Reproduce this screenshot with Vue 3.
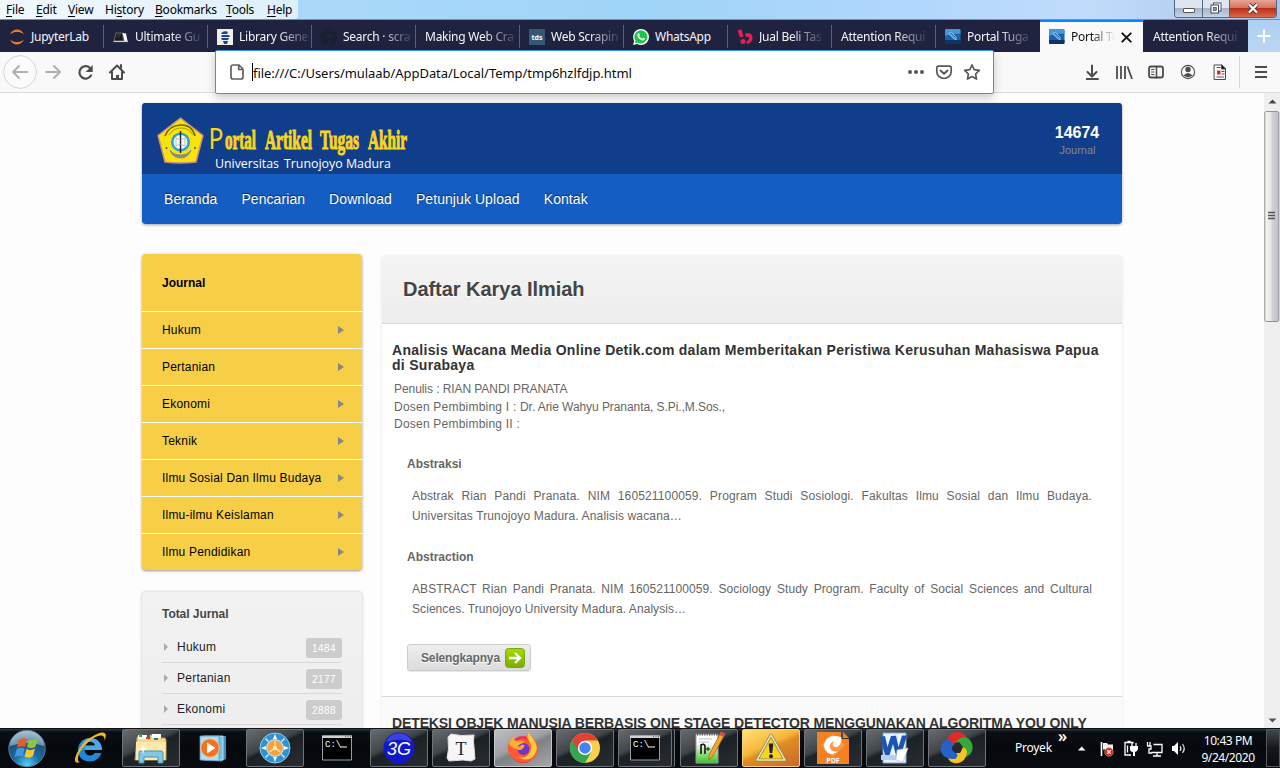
<script setup>
const menus = [
  { k: 'F', rest: 'ile', w: 30 },
  { k: 'E', rest: 'dit', w: 32 },
  { k: 'V', rest: 'iew', w: 37 },
  { pre: 'Hi', k: 's', rest: 'tory', w: 50 },
  { k: 'B', rest: 'ookmarks', w: 71 },
  { k: 'T', rest: 'ools', w: 41 },
  { k: 'H', rest: 'elp', w: 36 }
]
const tabs = [
  { t: 'JupyterLab', icon: 'jupyter' },
  { t: 'Ultimate Gu', icon: 'book', fade: true },
  { t: 'Library Gene', icon: 'libgen', fade: true },
  { t: 'Search · scra', icon: 'github', fade: true },
  { t: 'Making Web Cra', fade: true },
  { t: 'Web Scrapin', icon: 'tds', fade: true },
  { t: 'WhatsApp', icon: 'whatsapp' },
  { t: 'Jual Beli Tas', icon: 'bukalapak', fade: true },
  { t: 'Attention Requi', fade: true },
  { t: 'Portal Tuga', icon: 'portal', fade: true },
  { t: 'Portal Tu', icon: 'portal', fade: true, active: true },
  { t: 'Attention Requi', fade: true }
]
const nav = ['Beranda', 'Pencarian', 'Download', 'Petunjuk Upload', 'Kontak']
const journals = ['Hukum', 'Pertanian', 'Ekonomi', 'Teknik', 'Ilmu Sosial Dan Ilmu Budaya', 'Ilmu-ilmu Keislaman', 'Ilmu Pendidikan']
const totals = [['Hukum', 1484], ['Pertanian', 2177], ['Ekonomi', 2888]]
const apps = [
  { id: 'ie' }, { id: 'explorer', b: 1 }, { id: 'wmp' }, { id: 'compass', b: 1 }, { id: 'cmd' },
  { id: '3g', b: 1 }, { id: 'typora', b: 1 }, { id: 'firefox', b: 1, on: 1 }, { id: 'chrome', b: 1 },
  { id: 'cmd', b: 1, stack: 1 }, { id: 'npp', b: 1 }, { id: 'warn', b: 1, alert: 1 }, { id: 'pdf', b: 1 },
  { id: 'word', b: 1 }, { id: 'ring', b: 1 }
]
</script>

<template>
  <div class="screen">
    <div class="menubar">
      <div class="menus">
        <span v-for="m in menus" :key="m.rest" class="menu" :style="{ width: m.w + 'px' }">{{ m.pre }}<u>{{ m.k }}</u>{{ m.rest }}</span>
      </div>
      <div class="winbtns">
        <span class="wb wmin"><i class="dash"></i></span>
        <span class="wb wmax">
          <svg width="12" height="12" viewBox="0 0 12 12"><rect x="3.5" y="1" width="7.5" height="8" fill="#fff" stroke="#556" /><rect x="1" y="3" width="7.5" height="8" fill="#fff" stroke="#445" /><rect x="3.3" y="5.5" width="3" height="3" fill="#8a97ab" stroke="#445" stroke-width=".7" /></svg>
        </span>
        <span class="wb wclose">
          <svg width="12" height="11" viewBox="0 0 12 11"><path d="M2 1.5l8 8M10 1.5l-8 8" stroke="#533" stroke-width="4" /><path d="M2 1.5l8 8M10 1.5l-8 8" stroke="#fff" stroke-width="2.4" /></svg>
        </span>
      </div>
    </div>

    <div class="tabs">
      <div v-for="(t, i) in tabs" :key="i" class="tab" :class="{ active: t.active, nosep: i > 8 }">
        <svg v-if="t.icon" class="fav" width="16" height="16" viewBox="0 0 16 16">
          <g v-if="t.icon === 'jupyter'" fill="#f37726"><path d="M1 5.500C2.600 2 5 .4 8 .4s5.400 1.600 7 5.100C12.500 3.600 10.500 3 8 3s-4.500.6-7 2.500z" /><path d="M1 10.500C2.600 14 5 15.600 8 15.600s5.400-1.600 7-5.100c-2.500 1.900-4.500 2.500-7 2.500s-4.500-.6-7-2.500z" /></g>
          <g v-else-if="t.icon === 'book'"><path d="M3 4h6.500l1 8H1z" fill="#1a1a1a" stroke="#888" stroke-width=".7" /><path d="M9.500 4l3.500.5 1.500 7.500h-3z" fill="#fff" /><path d="M.5 12.500h14.500" stroke="#ccc" stroke-width="1.200" /><path d="M4 6h4M3.500 8h3" stroke="#444" /></g>
          <g v-else-if="t.icon === 'libgen'"><rect width="16" height="16" fill="#f1f0e6" /><path d="M4 5c1-2 3-3.500 6-2.500 1 .5 1 2 0 2.500zM5 6h7l1 2H4zM4 9h8l-1 2H5zM6 12h5l-1 3H7z" fill="#17458f" /></g>
          <path v-else-if="t.icon === 'github'" d="M6 15v-3c-2 .4-2.600-1-2.600-1M10 15v-3c0-1-.3-1.500-.7-1.800 2-.3 3.200-1.200 3.200-3.200 0-2.500-1.500-3.500-4.500-3.500S3.500 4.500 3.500 7c0 2 1 2.900 3 3.200M5.500 14.500a7 7 0 1 1 5 0" fill="none" stroke="#18202a" stroke-width="1.700" />
          <g v-else-if="t.icon === 'tds'"><rect width="16" height="16" fill="#355876" /><text x="8" y="10.700" text-anchor="middle" font-size="7" font-weight="700" fill="#fff">tds</text></g>
          <g v-else-if="t.icon === 'whatsapp'"><path d="M8 0a8 8 0 0 1 0 16 8 8 0 0 1-3.800-1L0 16l1.200-4A8 8 0 0 1 8 0z" fill="#fff" /><path d="M8 1.300a6.600 6.600 0 1 1-3.500 12.300L1.900 14.200l.7-2.500A6.600 6.600 0 0 1 8 1.300z" fill="#1fc44b" /><path d="M5 4.500c.8-.8 1.200-.3 1.700 1 .2.700-.4 1-.5 1.400.7 1.400 1.600 2.200 3 2.700.6-.1.8-1 1.300-.9 1.400.6 1.600.8 1.200 1.600-.8 1.500-2.700 1.300-4.500.2C5 9.200 3.600 6.500 5 4.500z" fill="#fff" /></g>
          <g v-else-if="t.icon === 'bukalapak'" fill="#e31e52"><path d="M.5 1.500L4.500.2l2 7.300-3.500 1z" /><circle cx="6" cy="12.600" r="2.500" /><path d="M8 4.500Q13 3 15 6q1.500 4-1 7-2 2-4.500 2L9.500 12q2.500-.5 2.500-2.500T8.500 7.500z" /></g>
          <g v-else><rect width="15.500" height="15" rx="1.500" fill="#1764ad" /><path d="M0 1.500Q0 0 1.500 0H14q1.500 0 1.500 1.500V5Q8 4 0 7z" fill="#4597d6" /><path d="M0 11h15.500v2.500q0 1.500-1.500 1.500H1.500Q0 15 0 13.500z" fill="#0c3468" /><path d="M4.500 4l2-.7 4.300 4.500.5 3L8.500 9.500 4.200 5z" fill="#2d71ae" stroke="#b5d7f2" stroke-width=".8" /><path d="M5.500 5l4 4" stroke="#d6eaff" stroke-width=".6" /></g>
        </svg>
        <span class="tt" :class="{ fade: t.fade }">{{ t.t }}</span>
        <svg v-if="t.active" class="tx" width="11" height="11" viewBox="0 0 11 11"><path d="M1.300 1.300l8.400 8.400M9.700 1.300L1.300 9.700" stroke="#111" stroke-width="1.900" stroke-linecap="round" /></svg>
      </div>
      <div class="newtab"><svg width="14" height="14" viewBox="0 0 14 14"><path d="M7 .5v13M.5 7h13" stroke="#fff" stroke-width="2" /></svg></div>
    </div>

    <div class="toolbar">
      <div class="navbtns">
        <svg width="130" height="40" viewBox="0 0 130 40" fill="none" stroke-width="2" stroke-linecap="round" stroke-linejoin="round">
          <circle cx="20" cy="20" r="16.300" fill="#fbfbfb" stroke="#d4d4d5" stroke-width="1" />
          <path d="M27 20H13M19 14l-6 6 6 6" stroke="#b0b0b1" />
          <path d="M46 20h14M54 14l6 6-6 6" stroke="#b0b0b1" />
          <path d="M91 23.500A6.200 6.200 0 1 1 90 16" stroke="#4c4c4f" stroke-width="2.200" />
          <path d="M92.700 13v7h-7z" fill="#4c4c4f" stroke="none" />
          <path d="M110 20.500l7-7 7 7" stroke="#4c4c4f" /><path d="M112 20v7h10v-7" stroke="#4c4c4f" /><path d="M116 28v-5h3v5z" fill="#4c4c4f" stroke="none" /><path d="M121 13v3" stroke="#4c4c4f" />
        </svg>
      </div>
      <div class="tools">
        <svg width="194" height="40" viewBox="0 0 194 40" fill="none" stroke="#4c4c4f" stroke-width="2" stroke-linecap="round" stroke-linejoin="round">
          <path d="M6 13.500v11M1.500 20L6 24.500l4.500-4.500M0 27h12" />
          <path d="M31 14v13M35 14v13M39 14v13M41.500 14.500l4.500 12.500" stroke-width="1.800" stroke-linecap="butt" />
          <rect x="63" y="14.500" width="14" height="11" rx="2" stroke-width="1.800" /><path d="M70.500 15v11" stroke-width="1.500" /><path d="M65.500 17.500h2.500M65.500 20h2.500M65.500 22.500h2.500" stroke-width="1" />
          <circle cx="102" cy="20" r="6.600" stroke-width="1.100" /><circle cx="102" cy="17.500" r="2.700" fill="#4c4c4f" stroke="none" /><path d="M97.500 23.500q4.500-5 9 0-4.500 3.500-9 0z" fill="#4c4c4f" stroke="none" />
          <path d="M128.500 13h7l4 4v10.500h-11z" fill="#fff" stroke-width="1" /><path d="M135.500 13v4h4z" fill="#111" stroke-width="1" /><path d="M131 15.500h3M131 25h6.500M136 19.500h2M136 22h2" stroke-width="1.200" stroke="#555" /><path d="M131 18.500h3.500v4H131z" fill="#d32b35" stroke="none" />
          <path d="M153.500 4v32" stroke="#d7d7db" stroke-width="1" /><path d="M169 15h12M169 20h12M169 25h12" stroke-linecap="butt" />
        </svg>
      </div>
    </div>
    <div class="urlbar">
      <svg class="doc" width="14" height="16" viewBox="0 0 14 16"><path d="M3 1h6l4 4v8a2 2 0 0 1-2 2H3a2 2 0 0 1-2-2V3a2 2 0 0 1 2-2zM8.700 1v4.500H13" fill="none" stroke="#616164" stroke-width="1.700" stroke-linejoin="round" /></svg>
      <span class="caret"></span><span class="url">file:///C:/Users/mulaab/AppData/Local/Temp/tmp6hzlfdjp.html</span>
      <svg class="uicons" width="74" height="20" viewBox="0 0 74 20">
        <g fill="#58585b"><circle cx="3" cy="10" r="2" /><circle cx="9" cy="10" r="2" /><circle cx="15" cy="10" r="2" /></g>
        <path d="M31.500 4.200h11a1.700 1.700 0 0 1 1.700 1.700v3.600a7.200 7 0 0 1-14.400 0V5.900a1.700 1.700 0 0 1 1.700-1.700z" fill="none" stroke="#58585b" stroke-width="1.700" /><path d="M33.500 8.500L37 11.800l3.500-3.300" fill="none" stroke="#58585b" stroke-width="1.900" stroke-linecap="round" stroke-linejoin="round" />
        <path d="M65 3l2.200 4.700 5.200.7-3.800 3.600.9 5.100L65 14.600l-4.500 2.500.9-5.100-3.800-3.600 5.200-.7z" fill="none" stroke="#58585b" stroke-width="1.700" stroke-linejoin="round" />
      </svg>
    </div>

    <div class="viewport">
      <div class="page">
        <header class="head">
          <div class="brand">
            <svg class="logo" width="280" height="71" viewBox="0 0 280 71">
              <path d="M38.500 15L61 32.500 54 59q-15.500 2-31 0L16 32.500z" fill="#f8e30b" stroke="#c98a83" stroke-width="1.500" stroke-linejoin="round" />
              <path d="M23 33q4-10.500 15.500-11T53 33" fill="none" stroke="#6b6413" stroke-width="1.700" />
              <path d="M27 32q4-7 12-7t12 7" fill="none" stroke="#a59c12" />
              <circle cx="38.500" cy="39" r="9.500" fill="#27a2d8" /><circle cx="38.500" cy="39" r="7" fill="#fff" />
              <path d="M38.500 28v22" stroke="#222" stroke-width="1.500" /><path d="M34 35v8M43 35v8M34 35l4 2 5-2M34 43l4-2 5 2" stroke="#9aa7b0" stroke-width=".8" fill="none" />
              <path d="M28 47q3 8 10.500 8T49 47q-3 5-10.500 5T28 47z" fill="#8f8b7d" stroke="#8f8b7d" /><circle cx="24.500" cy="45" r=".9" fill="#444" /><circle cx="53" cy="45" r=".9" fill="#444" />
              <g class="slab"><text class="bigp" x="66.500" y="46" textLength="15" lengthAdjust="spacingAndGlyphs">P</text>
                <text x="83" y="46" textLength="31" lengthAdjust="spacingAndGlyphs">ortal</text>
                <text x="123" y="46" textLength="47" lengthAdjust="spacingAndGlyphs">Artikel</text>
                <text x="178" y="46" textLength="39" lengthAdjust="spacingAndGlyphs">Tugas</text>
                <text x="226" y="46" textLength="39" lengthAdjust="spacingAndGlyphs">Akhir</text></g>
              <text class="univ" x="73" y="65" textLength="64" lengthAdjust="spacingAndGlyphs">Universitas</text>
              <text class="univ" x="142" y="65" textLength="107" lengthAdjust="spacingAndGlyphs">Trunojoyo Madura</text>
            </svg>
            <div class="count"><b>14674</b><span>Journal</span></div>
          </div>
          <nav class="nav"><a v-for="n in nav" :key="n">{{ n }}</a></nav>
        </header>

        <div class="cols">
          <aside class="side">
            <div class="jbox">
              <h3>Journal</h3>
              <div v-for="j in journals" :key="j" class="jrow"><span>{{ j }}</span><i></i></div>
            </div>
            <div class="tbox">
              <h3>Total Jurnal</h3>
              <div v-for="t in totals" :key="t[0]" class="trow"><i></i><span>{{ t[0] }}</span><em>{{ t[1] }}</em></div>
            </div>
          </aside>
          <main class="main">
            <h1>Daftar Karya Ilmiah</h1>
            <article>
              <h2>Analisis Wacana Media Online Detik.com dalam Memberitakan Peristiwa Kerusuhan Mahasiswa Papua<br>di Surabaya</h2>
              <div class="meta"><span class="tight">Penulis : RIAN PANDI PRANATA</span><br>Dosen Pembimbing I : <span class="tight">Dr. Arie Wahyu Prananta, S.Pi.,M.Sos.,</span><br>Dosen Pembimbing II :</div>
              <h4>Abstraksi</h4>
              <p class="wide"><span class="full">Abstrak Rian Pandi Pranata. NIM 160521100059. Program Studi Sosiologi. Fakultas Ilmu Sosial dan Ilmu Budaya.</span> Universitas Trunojoyo Madura. Analisis wacana…</p>
              <h4>Abstraction</h4>
              <p><span class="full">ABSTRACT Rian Pandi Pranata. NIM 160521100059. Sociology Study Program. Faculty of Social Sciences and Cultural</span> Sciences. Trunojoyo University Madura. Analysis…</p>
              <div class="more"><span>Selengkapnya</span>
                <svg width="20" height="20" viewBox="0 0 20 20"><defs><linearGradient id="gr" x2="0" y2="1"><stop stop-color="#a3dc00" /><stop offset="1" stop-color="#79ae00" /></linearGradient></defs><rect x=".5" y=".5" width="19" height="19" rx="3" fill="url(#gr)" stroke="#7aa813" /><path d="M4 10h10M10 5l5 5-5 5" fill="none" stroke="#fff" stroke-width="2.300" /></svg>
              </div>
            </article>
            <article class="alt"><h2>DETEKSI OBJEK MANUSIA BERBASIS ONE STAGE DETECTOR MENGGUNAKAN ALGORITMA YOU ONLY</h2></article>
          </main>
        </div>
      </div>
      <div class="scroll">
        <svg width="16" height="635" viewBox="0 0 16 635">
          <defs><linearGradient id="th"><stop stop-color="#f6f6f6" /><stop offset=".45" stop-color="#e6e6e8" /><stop offset=".5" stop-color="#d2d3d7" /><stop offset="1" stop-color="#bfc0c6" /></linearGradient></defs>
          <path d="M4.500 10.500l4-4 4 4z" fill="#444" /><path d="M4.500 625.500l4 4 4-4z" fill="#555" />
          <rect x=".8" y="18.500" width="14" height="210" rx="1.500" fill="url(#th)" stroke="#929294" />
          <path d="M4 119.500h7M4 122.500h7M4 125.500h7" stroke="#555" stroke-width="1.500" />
        </svg>
      </div>
    </div>

    <footer class="taskbar">
      <svg class="orb" width="56" height="39" viewBox="0 0 56 39">
        <defs><radialGradient id="ob" cx=".5" cy=".95" r=".9"><stop stop-color="#4fd2f7" /><stop offset=".4" stop-color="#1b6ca6" /><stop offset=".75" stop-color="#204f78" /><stop offset="1" stop-color="#8aa8bd" /></radialGradient></defs>
        <circle cx="27" cy="19.500" r="18.200" fill="url(#ob)" stroke="#5c7f96" />
        <path d="M10 17A17 15 0 0 1 44 17Q27 11 10 17z" fill="#b7cfdd" opacity=".55" />
        <path d="M19 11q4-3 8-1l-2 8q-4-2-8 1z" fill="#ee5a24" /><path d="M29 10.500q4 2 9-1l-2.500 8q-4 3-8.500.500z" fill="#8fc63d" /><path d="M16.500 20.500q4-3 8-1l-2 8q-4-2-8 1z" fill="#3d9be4" /><path d="M26.500 20q4 2.500 8.500-.500L33 27q-4 3-8.500.500z" fill="#fdc52c" />
      </svg>
      <div v-for="(a, i) in apps" :key="i" class="app" :class="{ btn: a.b, on: a.on, alert: a.alert, stack: a.stack }">
        <svg width="34" height="34" viewBox="0 0 34 34">
          <g v-if="a.id === 'ie'"><path d="M30 19H12.500c.3 4 3 5.500 5.500 5.500 2 0 3.500-.8 4.500-2.500h7c-2 5.500-6 8.500-11.500 8.500C11 30.500 6 26 6 19S11 7 18 7s12 4.500 12 12zm-7-4.500c-.5-2.500-2.300-3.700-5-3.700s-4.500 1.400-5.300 3.700z" fill="#1f87da" /><path d="M30 19H12.500l.2-4.500H23c-.5-2.500-2.300-3.700-5-3.700s-6 2-8 6C10 9 15 7 18 7c7 0 12 4.500 12 12z" fill="#75c9f8" opacity=".5" /><path d="M8 31Q0 34 4.500 23 10 10 22 4.500 31-.5 33.500 3q1 2-1 7 .5-5-3-5.500-5.500-.5-13.500 7-10 9-10 16-.5 3 2 3.500z" fill="#efb625" /></g>
          <g v-else-if="a.id === 'explorer'"><path d="M3 7q0-2 2-2h7l2 3h2V4h8l2 3h4q2 0 2 2v20H1z" fill="#f5d98c" stroke="#c89c3d" /><path d="M4 4h9v4H4zM18 3h9v4h-9z" fill="#fff" /><path d="M5 3h3v3H5z" fill="#37a537" /><path d="M12 6h4v2h-4z" fill="#cf392b" /><path d="M20 7h4v2h-4z" fill="#2377c9" /><path d="M2 11h30l-1 18H2z" fill="#fbe9a9" /><path d="M5 32V22q0-2 2-2h20q2 0 2 2v10h-5v-6H10v6z" fill="#85c7e7" stroke="#4093bb" /><path d="M9 14l1 3 3 1-3 1-1 4-1-4-3-1 3-1z" fill="#fff" /></g>
          <g v-else-if="a.id === 'wmp'"><path d="M9 5h21v23l-6 3z" fill="#3c8fbd" /><path d="M7 5h20v24H7z" fill="#79bee0" stroke="#d2edf8" stroke-width=".8" /><path d="M4 5h19v25l-19-1z" fill="#b3dcf0" stroke="#4a9dc8" stroke-width=".8" /><circle cx="14" cy="17" r="9.300" fill="#f17221" stroke="#fbc391" /><path d="M11 11.500v11l8.500-5.500z" fill="#fff" /></g>
          <g v-else-if="a.id === 'compass'"><circle cx="17" cy="17" r="15" fill="#2e93d4" stroke="#8dcdee" stroke-width="1" /><path d="M17 3l2 5h-4zM17 31l2-5h-4zM3 17l5-2v4zM31 17l-5-2v4z" fill="#fff" /><path d="M7.500 7.500l3 3M26.500 7.500l-3 3M7.500 26.500l3-3M26.500 26.500l-3-3" stroke="#d8eefa" stroke-width="1.500" /><circle cx="17" cy="17" r="8.300" fill="#f6a13b" stroke="#c5e4f5" stroke-width="1.200" /><path d="M17 10v7l-5.500 4M17 17l5.500 4" stroke="#ffe9b0" stroke-width="1.200" fill="none" /><circle cx="17" cy="17" r="2" fill="#fff4cf" /></g>
          <g v-else-if="a.id === 'cmd'"><path d="M2.500 5h29v24h-29z" fill="#000" stroke="#999ea3" /><path d="M2 4.500h30v2.500H2z" fill="#cdd1d6" /><path d="M25 5.700h1M27.500 5.700h1M30 5.700h1" stroke="#555" /><text class="mono" x="5" y="16">C:\</text><path d="M20 16h7" stroke="#fff" /></g>
          <g v-else-if="a.id === '3g'"><circle cx="17" cy="17" r="15.500" fill="#1218c8" /><path d="M4 11a14 14 0 0 1 26 0q-12-5-26 0z" fill="#5560f0" opacity=".6" /><text class="three" x="5" y="23.500" textLength="24" lengthAdjust="spacingAndGlyphs">3G</text></g>
          <g v-else-if="a.id === 'typora'"><path d="M7 3l10 1.500L30 4l-.5 6L31 28l-4 2-8-1-14 1-2-3 1.500-9L4 6z" fill="#f6f6f6" stroke="#ddd" /><text class="serif" x="17" y="24" text-anchor="middle">T</text></g>
          <g v-else-if="a.id === 'firefox'"><circle cx="17" cy="18.500" r="13.500" fill="#f6304a" /><path d="M17 31A14 13 0 0 0 32 18C32 11 27 8 22 1c-2 3-2 6 0 9-5-4-11-2-11 3-3-1-4-4-3-9C3 9 1 15 2 20c2 6 8 11 15 11z" fill="#ff5a35" /><path d="M22 1c-1 3-1 6 1 9 3 4 3 11-2 15-3 2-7 2-10 0 5 5 14 5 18-2C34 15 28 9 22 1z" fill="#ffc93a" /><path d="M3 13Q4 8 8 4q-1 4 2 6 5-2 8 1l-3 4-6 3q-5-3-6-5z" fill="#ffae33" /><circle cx="17.500" cy="18" r="6" fill="#6c38c7" /><path d="M9 16q5 0 7-2.500l3 1-3 4q-5 2-7-2.500z" fill="#ffa22d" /></g>
          <g v-else-if="a.id === 'chrome'"><circle cx="17" cy="17" r="15" fill="#fcd04a" /><path d="M4 9.500A15 15 0 0 1 30 9.500H17L10.500 20.500z" fill="#e34133" /><path d="M4 9.500A15 15 0 0 0 17 32l6.500-11.500h-13z" fill="#35a552" /><path d="M10.500 20.800L4 9.500" stroke="#2b8d44" stroke-width=".7" /><circle cx="17" cy="17" r="7.200" fill="#fff" /><circle cx="17" cy="17" r="5.700" fill="#4285f0" /></g>
          <g v-else-if="a.id === 'npp'"><defs><linearGradient id="ng" x2="0" y2="1"><stop offset=".3" stop-color="#fff" /><stop offset="1" stop-color="#34c51f" /></linearGradient></defs><path d="M4 3h22v29H4z" fill="url(#ng)" stroke="#999" /><path d="M5 3h21" stroke="#555" stroke-width="3" stroke-dasharray="1.200 1.200" /><path d="M7 8h13M7 11h10" stroke="#bbb" /><path d="M9 23v-9q3-2 4 1v8" fill="none" stroke="#111" stroke-width="1.600" /><path d="M14 18h4M16 16v4M20 18h4M22 16v4" stroke="#111" /><path d="M29 1l4 2-12 22-4 4v-5z" fill="#f1a830" stroke="#a76517" stroke-width=".8" /><path d="M29 1l4 2-1.500 3-4-2z" fill="#db4b4b" /></g>
          <g v-else-if="a.id === 'warn'"><path d="M17 4L31 29H3z" fill="#f8d21c" stroke="#8d8650" stroke-width="3" stroke-linejoin="round" /><path d="M17 4L31 29H3z" fill="none" stroke="#eee8c0" stroke-width="1.500" stroke-linejoin="round" /><path d="M14.700 12.500h4.600l-1 9.500h-2.600z" fill="#222" /><circle cx="17" cy="25.200" r="2" fill="#222" /></g>
          <g v-else-if="a.id === 'pdf'"><path d="M1 1h24v7h8v25H1z" fill="#f58220" /><path d="M27 1l6 6h-6z" fill="#f58220" /><path d="M17 3l12 11-12 12L5 14z" fill="#fba257" opacity=".7" /><path d="M25 6Q14 3 10 9q-5 8 2 13 6 3 10-2-6 2-8-3-1-5 4-7-3 5 1 6 5 0 6-5 1-4 0-5z" fill="#fff" /><text x="17" y="31.500" text-anchor="middle" font-size="7" font-weight="700" fill="#fff">PDF</text></g>
          <g v-else-if="a.id === 'word'"><path d="M5 2h23v30H5z" fill="#eaf2fd" stroke="#7fa5da" /><path d="M3 24h22v5H3z" fill="#b3cff2" /><path d="M2 6l5-1 2.500 11L13 5l5-.3L20.500 16 24 4.500h5L23 24h-5l-3-11-3.500 11H7z" fill="#1c55b0" /><path d="M19 19l11-2-5 14-7-2z" fill="#fff" stroke="#a7bddd" stroke-width=".6" /></g>
          <g v-else><path d="M7 9C11-2 26-1 27 9c-5-3-11-1-12 6C9 15 6 13 7 9z" fill="#e32a28" /><path d="M25 6c10 3 10 17 1 20-5-1-6-4-4-8 1-3-3-6-7-5 1-4 6-7 10-7z" fill="#37a93a" /><path d="M26 25c-3 10-17 9-18 1 1-5 5-5 9-4 4 0 5-3 5-6 5 1 6 5 4 9z" fill="#f6c324" /><path d="M15 28C-2 29-3 13 8 8c2 1 5 3 5 6-2 3-1 6 3 8 2 1 2 4-1 6z" fill="#2461c9" /><path d="M15 12l4-1 4 5-3 6-5 0-3-5z" fill="#252a30" /></g>
        </svg>
      </div>
      <div class="tray">
        <span class="proyek">Proyek</span><span class="chev">»</span>
        <svg width="112" height="39" viewBox="0 0 112 39">
          <path d="M0 21.500l3.700-4 3.700 4z" fill="#fff" />
          <path d="M23.500 13v14" stroke="#fff" stroke-width="1.600" /><path d="M25 14h4l1 1.500h5V22h-5l-1-1.500h-4z" fill="#f2f2f2" /><circle cx="31" cy="23" r="4.300" fill="#d9271c" stroke="#f08a82" stroke-width=".6" /><path d="M29.300 21.300l3.400 3.400M32.700 21.300l-3.400 3.400" stroke="#fff" stroke-width="1.300" />
          <path d="M55 14.500v-1h-8V26h6M49.500 12.500h3M49.500 16.500v7M54 14v4M58 14v4" stroke="#fff" stroke-width="1.300" fill="none" /><path d="M52 17h8v3q-1 3-3 3v4h-2v-4q-3 0-3-3z" fill="#fff" />
          <path d="M75.500 15.500H84v8H73.500M79 24v3M75 27h8M72 13v4M69.500 13v4M69 17h4v3h-2v4h3" stroke="#fff" stroke-width="1.300" fill="none" />
          <path d="M94 17h2l4-4v13l-4-4h-2z" fill="#fff" /><path d="M102 17q2 2.500 0 5M104.500 15q3.500 4.500 0 9" stroke="#ddd" stroke-width="1.200" fill="none" />
        </svg>
        <div class="clock"><span>10:43 PM</span><span>9/24/2020</span></div>
        <div class="peek"></div>
      </div>
    </footer>
  </div>
</template>

<style>
body { margin: 0; overflow: hidden; }
</style>
<style scoped>
* { box-sizing: border-box; }
.screen { width: 1280px; height: 768px; overflow: hidden; position: relative; display: flex; flex-direction: column; font-family: "Noto Sans", "Open Sans", sans-serif; background: #fdfdfd; }
h1, h2, h3, h4, p { margin: 0; }
.menubar { height: 20px; flex: none; display: flex; justify-content: space-between; background: linear-gradient(90deg, #b6dcfa 0, #a9d8f8 28%, #9fd5f8 50%, #b2d7fc 72%, #c1dcfb 85%, #a9c6e8 100%); border-bottom: 1px solid #7393ac; }
.menus { display: flex; width: 298px; padding-left: 6px; background: linear-gradient(90deg, rgba(255,255,255,.8), rgba(255,255,255,.6)); border-radius: 0 0 4px 0; }
.menu { flex: none; font-size: 12px; line-height: 20px; color: #000; white-space: nowrap; letter-spacing: -.22px; }
.menu u { text-underline-offset: 2px; }
.winbtns { display: flex; height: 18px; margin-right: 3px; border: 1px solid #53667d; border-top: 0; border-radius: 0 0 4px 4px; overflow: hidden; }
.wb { display: flex; align-items: center; justify-content: center; background: linear-gradient(#dde5f0 0 45%, #a4b6cd 50%, #c6d5e8); border-right: 1px solid #53667d; }
.wb svg { margin-top: -1px; }
.wmin { width: 28px; } .wmax { width: 27px; }
.dash { width: 12px; height: 5px; background: #fff; border: 1px solid #555; border-radius: 1px; margin-top: 3px; }
.wclose { width: 46px; border: 0; background: linear-gradient(#e8a596 0, #d27460 45%, #bb2f17 50%, #d9674a); }
.tabs { height: 32px; flex: none; display: flex; background: #202340; }
.tab { width: 104px; flex: none; display: flex; align-items: center; padding: 2px 4px 0 9px; color: #f4f4f8; border-right: 1px solid transparent; background: linear-gradient(#5b5e75, #5b5e75) 103px 5px / 1px 23px no-repeat; background-origin: border-box; }
.tab.nosep { background: none; }
.tab.active { background: #f9f9fa; border-top: 2px solid #0a84ff; border-right-color: #202340; color: #111; padding: 0 11px 0 9px; }
.fav { flex: none; margin-right: 6px; }
.tt { font-size: 12px; white-space: nowrap; letter-spacing: -.25px; line-height: 20px; }
.fade { -webkit-mask-image: linear-gradient(90deg, #000 calc(100% - 30px), rgba(0,0,0,.12)); mask-image: linear-gradient(90deg, #000 calc(100% - 30px), rgba(0,0,0,.12)); }
.active .fade { -webkit-mask-image: linear-gradient(90deg, #000 calc(100% - 28px), transparent 92%); mask-image: linear-gradient(90deg, #000 calc(100% - 28px), transparent 92%); }
.tx { flex: none; margin: 0 0 0 auto; }
.newtab { flex: 1; background: linear-gradient(#aecff0, #bcd6f3); display: flex; align-items: center; justify-content: center; }
.toolbar { height: 41px; flex: none; background: #f9f9fa; border-bottom: 1px solid #dcdcde; display: flex; justify-content: space-between; }
.toolbar svg { display: block; }
.urlbar { position: absolute; left: 215px; top: 50px; width: 779px; height: 44px; background: #fff; border: 1px solid #3d94ea; border-radius: 2px; box-shadow: 0 4px 10px rgba(0,0,0,.2); display: flex; align-items: center; padding: 0 12px 0 14px; z-index: 3; }
.doc { margin-right: 8px; }
.caret { width: 1px; height: 18px; background: #000; }
.url { font-size: 13px; color: #0c0c0d; flex: 1; letter-spacing: -.05px; white-space: nowrap; padding-top: 1px; }
.viewport { height: 635px; flex: none; display: flex; overflow: hidden; background: #fdfdfd; font-family: "Liberation Sans", Arial, sans-serif; }
.page { flex: 1; padding: 10px 0 0 142px; }
.scroll { width: 16px; flex: none; background: #efeff0; }
.head { width: 980px; height: 121px; border-radius: 4px; overflow: hidden; background: #145dc3; box-shadow: 0 1px 3px rgba(0,0,0,.35); }
.brand { height: 71px; background: #113e8a; display: flex; justify-content: space-between; box-shadow: inset 0 1px #323c50; }
.slab text { font-family: "Liberation Serif", serif; font-weight: 700; font-size: 28px; fill: #f9d51d; stroke: #f9d51d; stroke-width: 1.1; }
.slab .bigp { font-family: "Noto Sans", sans-serif; font-weight: 400; font-size: 29px; stroke: none; }
.univ { font-family: "Open Sans", sans-serif; font-size: 13px; fill: #fff; }
.count { width: 90px; text-align: center; padding-top: 20px; display: flex; flex-direction: column; }
.count b { font-size: 16px; line-height: 20px; color: #fff; }
.count span { font-size: 11px; line-height: 15px; color: #868788; padding-left: 1px; }
.nav { display: flex; gap: 24px; padding-left: 22px; font-size: 14px; line-height: 50px; color: #fff; text-shadow: 0 -1px 1px rgba(0,0,0,.6); letter-spacing: .07px; }
.cols { display: flex; width: 980px; padding-top: 30px; justify-content: space-between; }
.side { width: 220px; }
.jbox { background: #f7cf46; border-radius: 4px; box-shadow: 0 1px 3px rgba(0,0,0,.4); font-size: 12px; color: #111; height: 316px; }
.jbox h3 { font-size: 12px; height: 57px; line-height: 58px; padding-left: 20px; color: #000; }
.jrow { height: 37px; border-top: 1px solid #fff; padding: 0 18px 0 20px; display: flex; justify-content: space-between; align-items: center; white-space: nowrap; letter-spacing: .2px; color: #000; }
.jrow i { border-left: 6px solid #888; border-top: 4px solid transparent; border-bottom: 4px solid transparent; }
.tbox { margin-top: 22px; height: 300px; border-radius: 4px; background: linear-gradient(#f2f2f2, #e9e9ea); box-shadow: 0 0 3px rgba(0,0,0,.25); padding: 12px 20px 0; font-size: 12px; color: #222; letter-spacing: .25px; }
.tbox h3 { font-size: 12px; line-height: 20px; margin-bottom: 8px; color: #444; text-shadow: 0 1px #fff; letter-spacing: -.05px; }
.trow { height: 31px; border-bottom: 1px solid #d8d8d8; display: flex; align-items: center; }
.trow i { border-left: 4px solid #aaa; border-top: 4px solid transparent; border-bottom: 4px solid transparent; margin: 0 9px 0 2px; }
.trow span { flex: 1; }
.trow em { width: 36px; height: 20px; border-radius: 3px; background: #ccc; color: #fff; font: 10px/21px "Liberation Sans", sans-serif; letter-spacing: .5px; text-align: center; margin-top: 2px; }
.main { width: 740px; margin-top: 1px; background: #fff; box-shadow: 0 1px 3px rgba(0,0,0,.13); border-radius: 4px 4px 0 0; height: 500px; color: #666; font-size: 12px; }
.main h1 { height: 69px; background: linear-gradient(#f4f4f4, #ededed); border-bottom: 1px solid #d8d8d8; border-radius: 4px 4px 0 0; font-size: 20px; line-height: 69px; padding-left: 21px; color: #444; text-shadow: 0 1px #fff; letter-spacing: -.04px; }
article { height: 373px; padding: 19px 11px 0 10px; border-bottom: 1px solid #d8d8d8; }
article h2 { font-size: 14px; line-height: 15px; color: #333; white-space: nowrap; letter-spacing: .285px; }
article.alt { background: #fafafa; }
article.alt h2 { letter-spacing: -.12px; }
.meta { padding-left: 2px; margin-top: 8px; line-height: 17.500px; letter-spacing: .22px; height: 52px; }
.tight { letter-spacing: -.07px; }
h4 { font-size: 12px; line-height: 20px; padding-left: 15px; margin-top: 21px; color: #666; }
p { line-height: 20px; text-align: justify; padding: 0 19px 0 20px; margin-top: 12px; letter-spacing: .07px; }
.wide { letter-spacing: .14px; }
.full { display: block; white-space: nowrap; text-align: justify; text-align-last: justify; }
p + h4 { margin-top: 21px; }
.more { width: 124px; height: 27px; margin: 25px 0 0 15px; border: 1px solid #ccc; border-radius: 3px; background: linear-gradient(#eee, #dcdcdc); display: flex; align-items: center; justify-content: space-between; padding: 0 5px 0 13px; font-weight: 700; color: #666; text-shadow: 0 1px #fff; box-shadow: 0 1px 1px rgba(0,0,0,.1); letter-spacing: -.15px; }
.taskbar { flex: 1; background: linear-gradient(#31343a 0, #0b0f15 3px, #05080d 50%, #080b10); display: flex; gap: 4px; position: relative; z-index: 4; border-top: 1px solid #111; }
.orb { flex: none; }
.app { width: 58px; height: 38px; flex: none; display: flex; align-items: center; justify-content: center; border: 1px solid transparent; border-radius: 2px; }
.btn { border-color: #6d7378; background: linear-gradient(155deg, #686c70 0, #40454a 40%, #1c2125 48%, #292d31 100%); }
.on { border-color: #c5c8ca; background: linear-gradient(155deg, #bcbec1 0, #9fa1a4 42%, #7f8184 52%, #a4a6a8 100%); }
.alert { border-color: #f3d27a; background: linear-gradient(155deg, #ffe27a 0, #f6b63a 42%, #e08d24 52%, #c8692c 100%); }
.stack { width: 54px; margin-right: 4px; box-shadow: 2px 0 0 #15181c, 3px 0 0 #6d7378; }
.mono { font: 9px "Liberation Mono", monospace; fill: #fff; }
.three { font: italic 19px "Liberation Sans", sans-serif; fill: #fff; }
.serif { font: 18px "Liberation Serif", serif; fill: #222; }
.tray { margin-left: auto; display: flex; color: #fff; font-size: 12px; }
.proyek { line-height: 37px; width: 42px; letter-spacing: -.25px; margin-left: 1px; }
.chev { font-size: 16px; line-height: 14px; width: 21px; padding-left: 1px; font-weight: 600; }
.clock { width: 74px; display: flex; flex-direction: column; text-align: center; line-height: 17px; padding-top: 3px; letter-spacing: -.42px; margin-right: 1px; margin-left: 1px; }
.peek { width: 14px; height: 38px; border: 1px solid #555a60; background: linear-gradient(#43474b, #14171b 50%, #0b0d10); }
</style>
